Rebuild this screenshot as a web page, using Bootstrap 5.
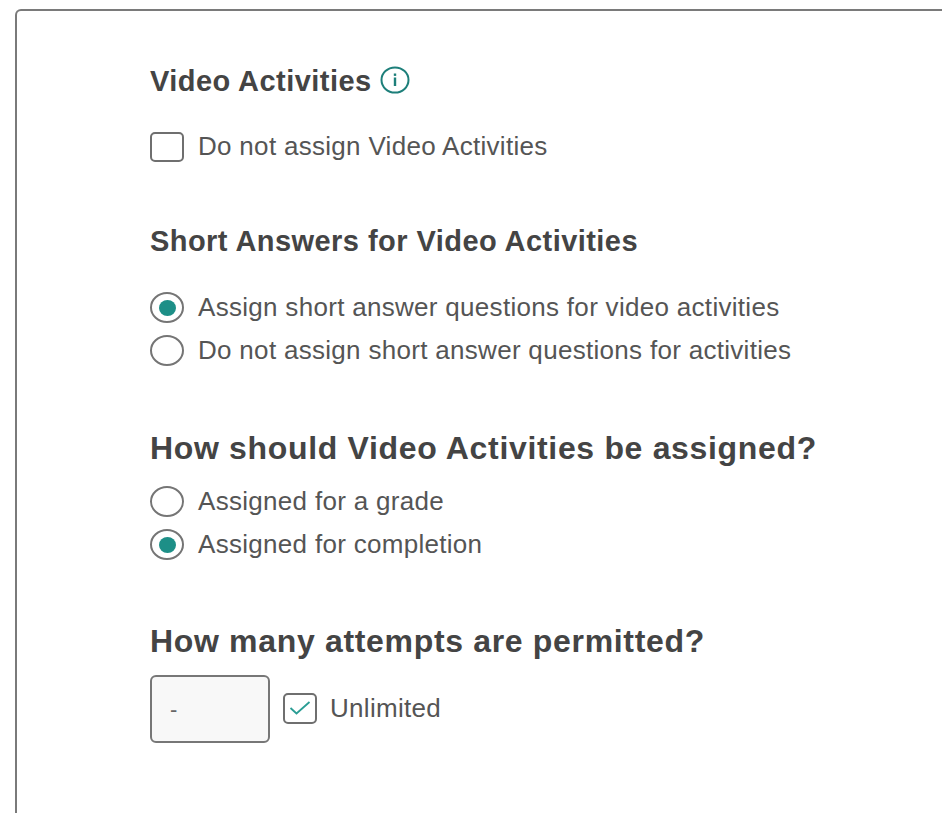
<!DOCTYPE html>
<html lang="en">
<head>
<meta charset="utf-8">
<title>Video Activities</title>
<link href="https://cdn.jsdelivr.net/npm/bootstrap@5.3.0/dist/css/bootstrap.min.css" rel="stylesheet">
<style>
html,body{height:813px;overflow:hidden;background:#fff}
body{font-family:"Liberation Sans",Arial,sans-serif;color:#4a4a4a}
.frame-panel{margin:9px -20px 0 15px;height:804px;border:2px solid #7a7a7a;border-bottom:0;border-radius:6px 6px 0 0;padding:0 0 0 133px}
.sec-title{font-family:inherit;font-weight:700;color:#444;margin:0}
.sec-sm{font-size:29px;line-height:32px;letter-spacing:.45px}
.sec-lg{font-size:32px;line-height:36px;letter-spacing:.67px}
.t1{margin-top:54px;display:flex;align-items:center;gap:8px}
.t1 svg{margin-top:-3px}
.t2{margin-top:57px}
.t3{margin-top:58px}
.t4{margin-top:57px}
.group-a{margin-top:28px}
.group-c{margin-top:29px}
.group-b{margin-top:14px}
.opt-row{display:flex;align-items:center;gap:14px;font-size:26px;line-height:43px;height:43px;color:#555;letter-spacing:.3px}
.box-ic{width:34px;height:30px;border:2px solid #6f6f6f;border-radius:5px;flex:none;background:#fff}
.rad-ic{width:34px;height:31px;border:2px solid #757575;border-radius:50%;flex:none;display:flex;align-items:center;justify-content:center}
.rad-ic.on::after{content:"";width:17px;height:16px;border-radius:50%;background:#1d8f87}
.count-box{width:120px;height:68px;border:2px solid #777;border-radius:6px;background:#f8f8f8;padding-left:18px;display:flex;align-items:center;font-size:22px;color:#666}
.chk-on{width:34px;height:31px;border:2px solid #6f6f6f;border-radius:5px;display:flex;align-items:center;justify-content:center;flex:none}
.extra-row{margin-left:13px;margin-bottom:2px;gap:13px}
</style>
</head>
<body>
<div class="frame-panel">
  <h2 class="sec-title sec-sm t1">Video Activities
    <svg width="30" height="28" viewBox="0 0 30 28" fill="none" aria-hidden="true"><ellipse cx="15" cy="14" rx="13.5" ry="12.6" stroke="#1d7f7a" stroke-width="2"/><rect x="13.8" y="11.5" width="2.4" height="8.5" fill="#1d7f7a"/><rect x="13.8" y="7.5" width="2.4" height="2.4" fill="#1d7f7a"/></svg>
  </h2>
  <div class="opt-row group-a"><span class="box-ic"></span><span>Do not assign Video Activities</span></div>
  <h2 class="sec-title sec-sm t2">Short Answers for Video Activities</h2>
  <div class="group-c">
    <div class="opt-row"><span class="rad-ic on"></span><span>Assign short answer questions for video activities</span></div>
    <div class="opt-row"><span class="rad-ic"></span><span>Do not assign short answer questions for activities</span></div>
  </div>
  <h2 class="sec-title sec-lg t3">How should Video Activities be assigned?</h2>
  <div class="group-b">
    <div class="opt-row"><span class="rad-ic"></span><span>Assigned for a grade</span></div>
    <div class="opt-row"><span class="rad-ic on"></span><span>Assigned for completion</span></div>
  </div>
  <h2 class="sec-title sec-lg t4">How many attempts are permitted?</h2>
  <div class="d-flex align-items-center mt-3">
    <div class="count-box">-</div>
    <div class="opt-row extra-row"><span class="chk-on"><svg width="22" height="14" viewBox="0 0 22 14" fill="none" aria-hidden="true"><path d="M1.5 7 7.5 12.5 20.5 1" stroke="#2a9d94" stroke-width="1.8"/></svg></span><span>Unlimited</span></div>
  </div>
</div>
<script src="https://cdn.jsdelivr.net/npm/bootstrap@5.3.0/dist/js/bootstrap.bundle.min.js"></script>
</body>
</html>
